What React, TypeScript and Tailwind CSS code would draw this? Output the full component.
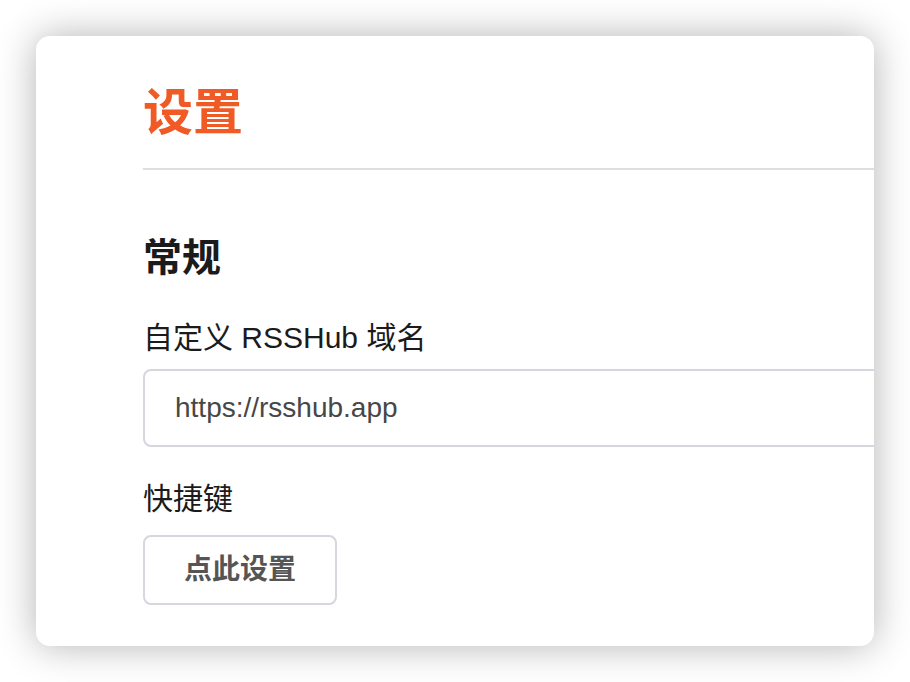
export default function App() {
  const font = { fontFamily: '"Liberation Sans", "Noto Sans CJK SC", sans-serif' };
  return (
    <div className="w-[910px] h-[682px] bg-white pt-[36px] pl-[36px]" style={font}>
      <div className="w-[838px] h-[610px] bg-white rounded-[14px] overflow-hidden shadow-[0_0_38px_rgba(0,0,0,0.3)]">
        <div className="w-[900px] pl-[107px] pt-[52px] flex flex-col items-start">
          <h1 className="text-[50px] leading-[50px] font-bold text-[#f05a24]">设置</h1>
          <div className="mt-[30px] h-[2px] w-full bg-[#dedede]" />
          <h2 className="mt-[68px] text-[39px] leading-[39px] font-bold text-[#1b1b1b]">常规</h2>
          <label className="mt-[46px] text-[30px] leading-[30px] text-[#1b1b1b]">自定义 RSSHub 域名</label>
          <div className="mt-[16px] h-[78px] w-full border-2 border-[#d6d6de] rounded-[8px] flex items-center pl-[30px] text-[28px] text-[#474747]">
            https://rsshub.app
          </div>
          <label className="mt-[37px] text-[30px] leading-[30px] text-[#1b1b1b]">快捷键</label>
          <button className="mt-[21px] w-[194px] h-[70px] border-2 border-[#d6d6de] rounded-[8px] bg-white text-[28px] font-bold text-[#555555] flex items-center justify-center">
            点此设置
          </button>
        </div>
      </div>
    </div>
  );
}
